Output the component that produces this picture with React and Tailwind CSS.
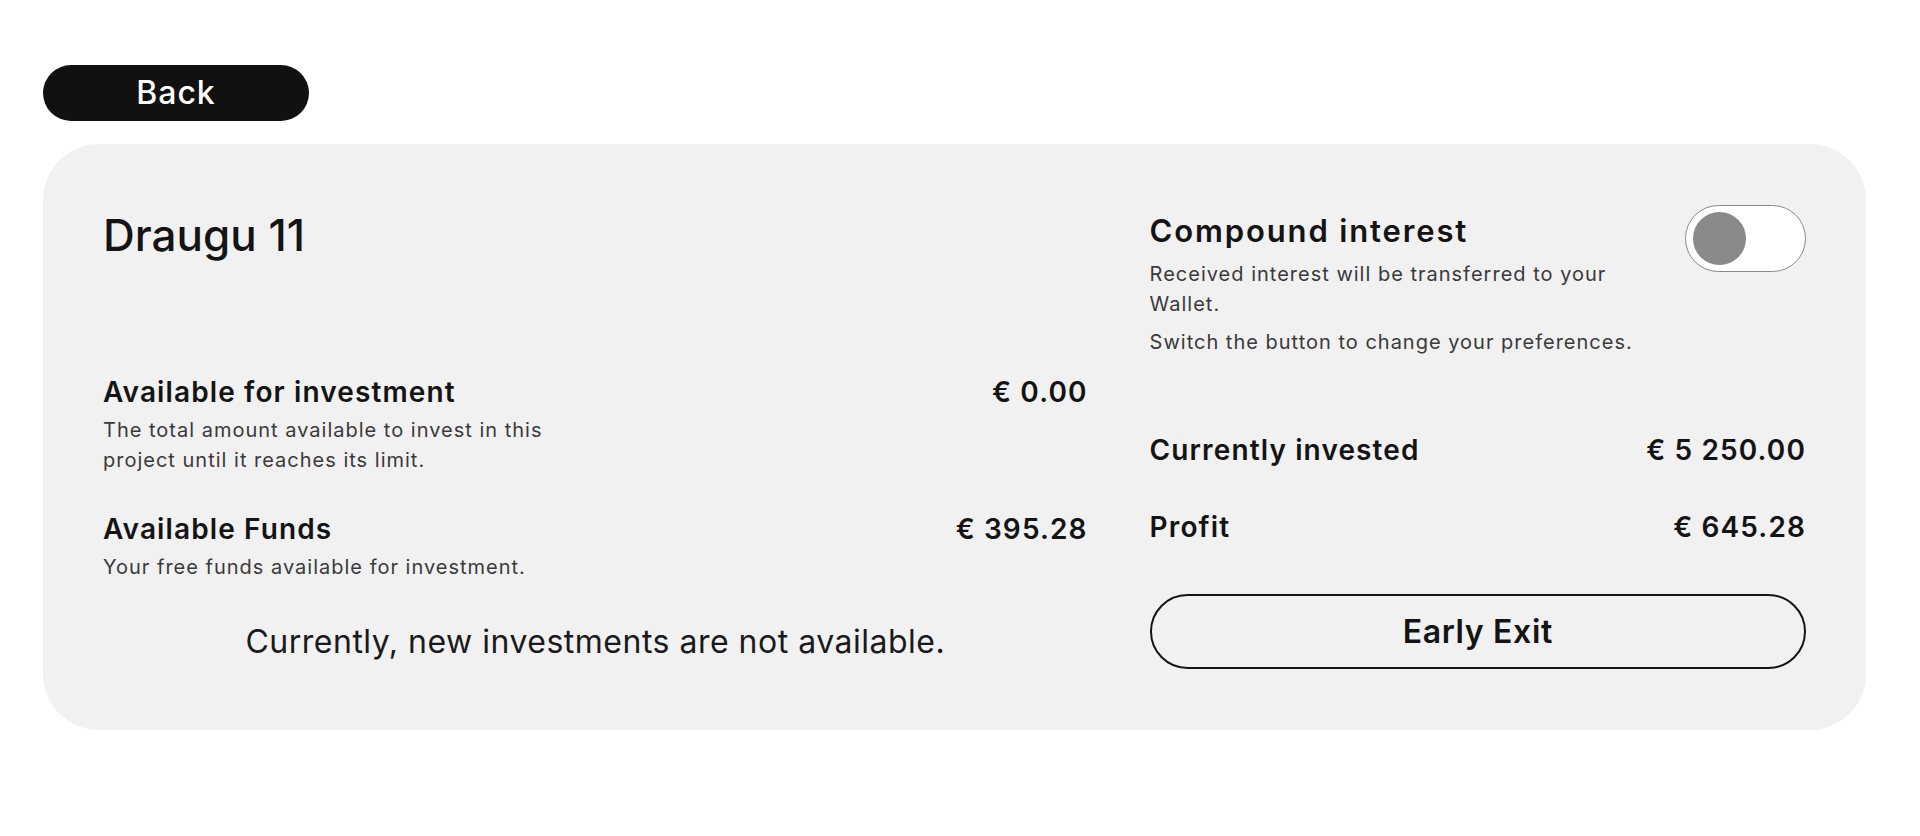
import React from "react";

function Row({ label, value, children }) {
  return (
    <div>
      <div className="flex items-start justify-between">
        <p className="text-[28px] leading-[34px] font-semibold tracking-[0.04em] text-[#141414]">{label}</p>
        <p className="text-[28px] leading-[34px] font-semibold tracking-[0.04em] text-[#141414]">{value}</p>
      </div>
      {children}
    </div>
  );
}

export default function App() {
  const [compound, setCompound] = React.useState(false);

  return (
    <div className="min-h-screen bg-white px-[43px] pt-[65px] font-['Inter',sans-serif] text-[#141414]">
      <button
        type="button"
        className="flex h-[56px] w-[266px] items-center justify-center rounded-full bg-[#111111] text-[32px] font-medium tracking-[0.03em] text-white"
      >
        Back
      </button>

      <section className="mt-[23px] grid w-[1823px] grid-cols-[3fr_2fr] gap-x-[62px] rounded-[56px] bg-[#f1f1f1] px-[60px] pt-[61px] pb-[61px]">
        {/* left column */}
        <div className="flex flex-col">
          <h1 className="mt-[4px] text-[44px] leading-[52px] font-medium">Draugu 11</h1>

          <div className="mt-[114px]">
            <Row label="Available for investment" value="€ 0.00">
              <p className="mt-[6px] w-[480px] text-[20px] leading-[30px] tracking-[0.05em] text-[#3a3a3a]">
                The total amount available to invest in this project until it reaches its limit.
              </p>
            </Row>
          </div>

          <div className="mt-[37px]">
            <Row label="Available Funds" value="€ 395.28">
              <p className="mt-[6px] text-[20px] leading-[30px] tracking-[0.05em] text-[#3a3a3a]">
                Your free funds available for investment.
              </p>
            </Row>
          </div>

          <p className="mt-[40px] text-center text-[32px] leading-[40px] tracking-[0.5px] text-[#1a1a1a]">
            Currently, new investments are not available.
          </p>
        </div>

        {/* right column */}
        <div className="flex flex-col">
          <div className="flex items-start justify-between gap-[30px]">
            <div className="w-[500px]">
              <h2 className="mt-[8px] text-[31px] leading-[36px] font-semibold tracking-[0.06em]">Compound interest</h2>
              <p className="mt-[10px] text-[20px] leading-[30px] tracking-[0.05em] text-[#3a3a3a]">
                Received interest will be transferred to your Wallet.
              </p>
              <p className="mt-[8px] text-[20px] leading-[30px] tracking-[0.05em] text-[#3a3a3a]">
                Switch the button to change your preferences.
              </p>
            </div>
            <button
              type="button"
              onClick={() => setCompound((v) => !v)}
              className={`flex h-[67px] w-[121px] shrink-0 items-center rounded-full border border-[#8a8a8a] px-[7px] ${
                compound ? "justify-end bg-[#111111]" : "justify-start bg-white"
              }`}
            >
              <span className="block size-[53px] rounded-full bg-[#8a8a8a]" />
            </button>
          </div>

          <div className="mt-[76px]">
            <Row label="Currently invested" value="€ 5 250.00" />
          </div>
          <div className="mt-[43px]">
            <Row label="Profit" value="€ 645.28" />
          </div>

          <button
            type="button"
            className="mt-[50px] flex h-[75px] w-full items-center justify-center rounded-full border-2 border-[#141414] text-[32px] font-semibold tracking-[0.02em]"
          >
            Early Exit
          </button>
        </div>
      </section>
    </div>
  );
}
